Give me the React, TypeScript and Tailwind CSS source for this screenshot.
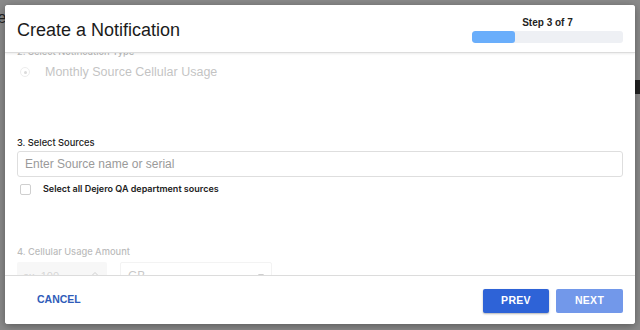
import React from "react";

export default function App() {
  const font = { fontFamily: '"Liberation Sans", Arial, Helvetica, sans-serif' };
  const inter = { fontFamily: '"Inter", "Liberation Sans", Arial, sans-serif' };
  return (
    <div className="w-[640px] h-[330px] bg-[#8a8a8a] relative overflow-hidden" style={font}>
      {/* background glimpses */}
      <div className="absolute left-0 top-[10px] text-[16px] text-[#222] leading-none -ml-[6px]">ie</div>
      <div className="absolute right-0 top-[80px] w-[5px] h-[14px] bg-[#222]" />
      <div className="absolute left-[5px] top-[5px] w-[630px] h-[319px] bg-white rounded-[3px] shadow-[0_2px_8px_rgba(0,0,0,0.35)] flex flex-col overflow-hidden">
        {/* header */}
        <div className="h-[48px] shrink-0 flex items-center justify-between pl-[12px] pr-[12px] border-b border-[#dcdcdc] shadow-[0_1px_2px_rgba(0,0,0,0.08)] relative z-10 bg-white">
          <div className="text-[18px] text-[#1b1b1b] mt-[4px]">Create a Notification</div>
          <div className="flex flex-col items-center w-[151px] mt-[2px]">
            <div className="text-[10px] font-bold text-[#222] leading-[12px] mb-[2px]">Step 3 of 7</div>
            <div className="w-[151px] h-[12px] bg-[#eef0f4] rounded-[3px] overflow-hidden">
              <div className="h-full w-[43px] bg-[#6aaefb] rounded-[3px]" />
            </div>
          </div>
        </div>
        {/* body */}
        <div className="flex-1 overflow-hidden px-[12px]">
          <div className="-mt-[7px] flex flex-col">
            <div className="opacity-35">
              <div className="h-[12px] leading-[12px] text-[9.3px] font-medium text-[#333]" style={inter}>2. Select Notification Type</div>
              <div className="mt-[6px] h-[16px] flex items-center">
                <div className="ml-[3px] w-[10px] h-[10px] rounded-full border border-[#ccc] flex items-center justify-center">
                  <div className="w-[3px] h-[3px] rounded-full bg-[#999]" />
                </div>
                <div className="ml-[15px] text-[12.5px] text-[#555] leading-[16px]">Monthly Source Cellular Usage</div>
              </div>
            </div>
            <div className="mt-[57px] h-[12px] leading-[12px] text-[9.3px] font-medium text-[#222]" style={inter}>3. Select Sources</div>
            <div className="mt-[2px] h-[26px] border border-[#dedede] rounded-[3px] flex items-center px-[7px] text-[12px] text-[#9a9a9a]">
              Enter Source name or serial
            </div>
            <div className="mt-[5px] h-[14px] flex items-center">
              <div className="ml-[3px] w-[11px] h-[11px] border border-[#cfcfcf] rounded-[2px] bg-white" />
              <div className="ml-[12px] text-[9px] font-semibold text-[#222] leading-[12px]" style={inter}>Select all Dejero QA department sources</div>
            </div>
            <div className="opacity-40">
              <div className="mt-[50px] h-[12px] leading-[12px] text-[9.3px] font-medium text-[#555]" style={inter}>4. Cellular Usage Amount</div>
              <div className="mt-[4px] flex gap-[13px]">
                <div className="w-[90px] h-[28px] bg-[#ececec] rounded-[2px] flex items-center justify-between px-[6px] text-[11px] text-[#999]">
                  <span>ex. 100</span>
                  <svg width="8" height="10" viewBox="0 0 8 10" className="mr-[2px]">
                    <path d="M1.5 4 L4 1.5 L6.5 4" stroke="#888" strokeWidth="1" fill="none" />
                    <path d="M1.5 6 L4 8.5 L6.5 6" stroke="#888" strokeWidth="1" fill="none" />
                  </svg>
                </div>
                <div className="w-[152px] h-[28px] border border-[#e2e2e2] rounded-[2px] flex items-center justify-between px-[7px] text-[12px] text-[#777]">
                  <span>GB</span>
                  <svg width="6" height="4" viewBox="0 0 6 4">
                    <path d="M0 0 L6 0 L3 4 Z" fill="#888" />
                  </svg>
                </div>
              </div>
            </div>
          </div>
        </div>
        {/* footer */}
        <div className="h-[49px] shrink-0 border-t border-[#dcdcdc] flex items-center justify-between px-[12px] bg-white">
          <button className="ml-[20px] text-[10.5px] font-bold text-[#2f5cb9]">CANCEL</button>
          <div className="flex gap-[7px] mt-[1px]">
            <button className="w-[66px] h-[24px] bg-[#2e63d7] text-white text-[10.5px] font-bold tracking-[0.3px] rounded-[2px] shadow-[0_1px_2px_rgba(0,0,0,0.3)]">PREV</button>
            <button className="w-[67px] h-[24px] bg-[#7298ea] text-white text-[10.5px] font-bold tracking-[0.3px] rounded-[2px]">NEXT</button>
          </div>
        </div>
      </div>
    </div>
  );
}
